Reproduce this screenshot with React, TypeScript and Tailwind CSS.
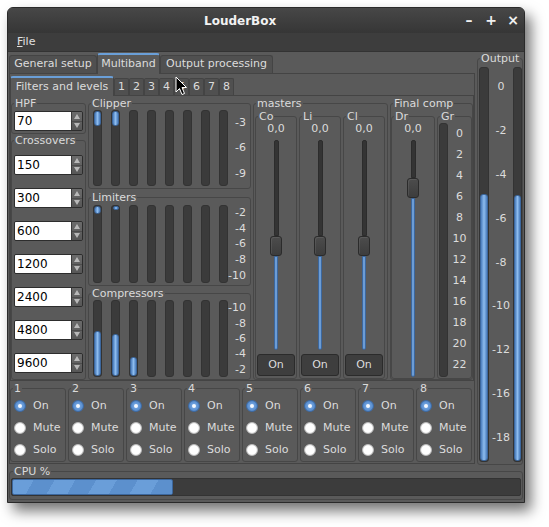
import React from 'react';

type GroupProps = {
  label: string;
  className?: string;
  children?: React.ReactNode;
};

function Group({ label, className = '', children }: GroupProps) {
  return (
    <fieldset className={`min-w-0 rounded-[3px] border border-[#474747] ${className}`}>
      <legend className="ml-[2px] px-[1px] text-[11px] leading-[13px] text-[#dadada]">{label}</legend>
      {children}
    </fieldset>
  );
}

const blueV = 'bg-[linear-gradient(90deg,#4a7cbc,#8dbcee_50%,#4a7cbc)] border border-[#3c679d]';

function Trough({ className = '', children }: { className?: string; children?: React.ReactNode }) {
  return (
    <div className={`flex w-[9px] flex-col rounded-[3px] border border-[#333] bg-[#3b3b3b] ${className}`}>
      {children}
    </div>
  );
}

function Spin({ value, className = '' }: { value: string; className?: string }) {
  return (
    <div className={`flex h-[20px] w-[69px] overflow-hidden rounded-[2px] border border-[#2d2d2d] ${className}`}>
      <div className="flex-1 bg-white px-[2px] text-[12px] leading-[18px] text-black">{value}</div>
      <div className="flex w-[11px] flex-col border-l border-[#3a3a3a] bg-gradient-to-b from-[#6b6b6b] to-[#575757]">
        <div className="flex flex-1 items-center justify-center">
          <svg width="6" height="5" viewBox="0 0 6 5">
            <polygon points="3,0 6,5 0,5" fill="#b8b8b8" />
          </svg>
        </div>
        <div className="flex flex-1 items-center justify-center border-t border-[#4c4c4c]">
          <svg width="6" height="5" viewBox="0 0 6 5">
            <polygon points="0,0 6,0 3,5" fill="#b8b8b8" />
          </svg>
        </div>
      </div>
    </div>
  );
}

function Scale({ values, className = '' }: { values: string[]; className?: string }) {
  return (
    <div className={`flex flex-1 flex-col justify-around pr-[4px] text-right text-[11px] leading-[13px] text-[#dcdcdc] ${className}`}>
      {values.map((v) => (
        <div key={v}>{v}</div>
      ))}
    </div>
  );
}

function Handle() {
  return (
    <div className="h-[20px] w-[12px] rounded-[3px] border border-[#2b2b2b] bg-gradient-to-b from-[#4c4c4c] to-[#3d3d3d] shadow-[inset_1px_1px_0_rgba(255,255,255,0.08)]" />
  );
}

function MasterStrip({ label }: { label: string }) {
  return (
    <Group label={label} className="flex h-[269px] w-[42px] flex-col items-center">
      <div className="text-[11px] leading-[12px] text-[#dcdcdc]">0,0</div>
      <div className="mt-[5px] flex flex-col items-center">
        <div className="h-[96px] w-[5px] rounded-t-[2px] border border-[#2c2c2c] bg-[#343434]" />
        <Handle />
        <div className={`h-[94px] w-[4px] rounded-b-[2px] ${blueV}`} />
      </div>
      <div className="mt-[4px] flex h-[22px] w-[38px] items-center justify-center rounded-[3px] border border-[#2b2b2b] bg-[#3e3e3e] text-[11px] text-[#dcdcdc]">
        On
      </div>
    </Group>
  );
}

function Radio({ on, label }: { on?: boolean; label: string }) {
  return (
    <div className="flex h-[22px] items-center gap-[7px] pl-[3px] text-[11px] text-[#dcdcdc]">
      {on ? (
        <span className="h-[12px] w-[12px] rounded-full border border-[#3d6aa3] bg-[radial-gradient(circle,#ffffff_0,#eaf2fc_1.5px,#6b9edc_2.5px,#4d82c4_6px)]" />
      ) : (
        <span className="h-[12px] w-[12px] rounded-full border border-[#bdbdbd] bg-[radial-gradient(circle,#ffffff_0,#ffffff_4px,#e4e4e4_6px)]" />
      )}
      <span>{label}</span>
    </div>
  );
}

export default function App() {
  const crossovers = ['150', '300', '600', '1200', '2400', '4800', '9600'];
  const grScale = ['0', '2', '4', '6', '8', '10', '12', '14', '16', '18', '20', '22'];
  const outScale = ['0', '-2', '-4', '-6', '-8', '-10', '-12', '-16', '-18'];
  const bars = [0, 1, 2, 3, 4, 5, 6, 7];
  const compFill = ['h-[45px]', 'h-[42px]', 'h-[19px]'];

  return (
    <div className="h-[527px] w-[549px] bg-white pl-[7px] pt-[7px] font-['DejaVu_Sans',sans-serif]">
      <div className="flex h-[496px] w-[518px] flex-col overflow-hidden rounded-t-[6px] border border-[#2a2a2a] bg-[#5a5a5a] shadow-[6px_8px_14px_rgba(0,0,0,0.55)]">
        {/* title bar */}
        <div className="flex h-[25px] items-center bg-gradient-to-b from-[#474747] to-[#363636] pl-[196px]">
          <span className="text-[12px] font-bold text-[#f2f2f2]">LouderBox</span>
          <div className="ml-auto flex text-[14px] font-bold text-[#f0f0f0]">
            <span className="w-[22px] text-center">–</span>
            <span className="w-[22px] text-center">+</span>
            <span className="w-[22px] text-center">×</span>
          </div>
        </div>

        {/* menu bar */}
        <div className="flex h-[19px] items-center border-b border-[#333] bg-[#3d3d3d] pl-[9px] text-[11px] text-[#e0e0e0]">
          <span>
            <span className="underline">F</span>ile
          </span>
        </div>

        {/* body */}
        <div className="flex flex-1 flex-col px-[1px]">
          <div className="flex h-[412px] gap-[2px]">
            {/* left column: tabs */}
            <div className="flex w-[466px] flex-col">
              <div className="flex h-[21px] items-end text-[11px] text-[#dcdcdc]">
                <div className="flex h-[18px] w-[88px] items-center justify-center rounded-t-[3px] border border-b-0 border-[#444] bg-[#505050]">
                  General setup
                </div>
                <div className="relative z-10 -mb-px flex h-[21px] w-[63px] items-center justify-center rounded-t-[3px] border border-b-0 border-[#444] border-t-[2px] border-t-[#6a9fd8] bg-[#5a5a5a]">
                  Multiband
                </div>
                <div className="flex h-[18px] w-[113px] items-center justify-center rounded-t-[3px] border border-b-0 border-[#444] bg-[#505050]">
                  Output processing
                </div>
              </div>

              <div className="flex flex-1 flex-col border border-[#444] pt-[2px]">
                {/* sub tabs */}
                <div className="relative flex h-[19px] items-end text-[11px] text-[#dcdcdc]">
                  <div className="relative z-10 -mb-px flex h-[20px] w-[104px] items-center justify-center rounded-t-[3px] border border-b-0 border-[#444] border-t-[2px] border-t-[#6a9fd8] bg-[#5a5a5a]">
                    Filters and levels
                  </div>
                  {bars.map((i) => (
                    <div
                      key={i}
                      className="flex h-[17px] w-[15px] items-center justify-center rounded-t-[2px] border border-b-0 border-[#444] bg-[#505050]"
                    >
                      {i + 1}
                    </div>
                  ))}
                  <svg width="13" height="20" viewBox="0 0 13 20" className="pointer-events-none absolute left-[165px] top-0 z-20">
                    <path d="M1 1 L1 16 L4.5 12.5 L7 18.5 L9.5 17.5 L7 11.5 L11.5 11.5 Z" fill="#000" stroke="#fff" strokeWidth="1" strokeLinejoin="round" />
                  </svg>
                </div>

                {/* sub frame */}
                <div className="flex h-[286px] gap-[2px] border border-[#444] pt-[1px]">
                  {/* HPF + crossovers */}
                  <div className="flex w-[75px] flex-col">
                    <Group label="HPF" className="flex h-[37px] flex-col">
                      <Spin value="70" className="ml-[2px] mt-[1px]" />
                    </Group>
                    <Group label="Crossovers" className="h-[246px]">
                      <div className="flex flex-col gap-[13px] pl-[2px] pt-[8px]">
                        {crossovers.map((c) => (
                          <Spin key={c} value={c} />
                        ))}
                      </div>
                    </Group>
                  </div>

                  {/* clipper / limiters / compressors */}
                  <div className="flex w-[163px] flex-col">
                    <Group label="Clipper" className="flex h-[92px] pb-[2px]">
                      <div className="ml-[4px] flex h-[76px] gap-[9px]">
                        {bars.map((i) => (
                          <Trough key={i}>
                            {i < 2 && <div className={`h-[15px] rounded-[3px] ${blueV}`} />}
                          </Trough>
                        ))}
                      </div>
                      <Scale values={['-3', '-6', '-9']} />
                    </Group>
                    <Group label="Limiters" className="mt-[2px] flex h-[95px] pb-[2px]">
                      <div className="ml-[4px] mt-[1px] flex h-[78px] gap-[9px]">
                        {bars.map((i) => (
                          <Trough key={i} className="items-center">
                            {i === 0 && <div className={`h-[8px] w-full rounded-full ${blueV}`} />}
                            {i === 1 && <div className={`h-[4px] w-[6px] rounded-full ${blueV}`} />}
                          </Trough>
                        ))}
                      </div>
                      <Scale values={['-2', '-4', '-6', '-8', '-10']} className="mt-[1px]" />
                    </Group>
                    <Group label="Compressors" className="mt-[1px] flex h-[93px] pb-[2px]">
                      <div className="ml-[4px] flex h-[77px] gap-[9px]">
                        {bars.map((i) => (
                          <Trough key={i} className="justify-end">
                            {i < 3 && <div className={`${compFill[i]} rounded-[3px] ${blueV}`} />}
                          </Trough>
                        ))}
                      </div>
                      <Scale values={['-10', '-8', '-6', '-4', '-2']} />
                    </Group>
                  </div>

                  {/* masters */}
                  <Group label="masters" className="flex h-[283px] w-[135px]">
                    <div className="ml-[1px] flex gap-[2px]">
                      <MasterStrip label="Co" />
                      <MasterStrip label="Li" />
                      <MasterStrip label="Cl" />
                    </div>
                  </Group>

                  {/* final comp */}
                  <Group label="Final comp" className="flex h-[283px] w-[83px] gap-[2px]">
                    <Group label="Dr" className="flex h-[269px] w-[44px] flex-col items-center">
                      <div className="text-[11px] leading-[12px] text-[#dcdcdc]">0,0</div>
                      <div className="mt-[5px] flex flex-col items-center">
                        <div className="h-[38px] w-[5px] rounded-t-[2px] border border-[#2c2c2c] bg-[#343434]" />
                        <Handle />
                        <div className={`h-[179px] w-[4px] rounded-b-[2px] ${blueV}`} />
                      </div>
                    </Group>
                    <Group label="Gr" className="flex h-[269px] w-[35px]">
                      <Trough className="ml-[1px] h-[254px]" />
                      <div className="flex flex-1 flex-col text-center text-[11px] text-[#dcdcdc]">
                        {grScale.map((g) => (
                          <div key={g} className="h-[21px] leading-[21px]">
                            {g}
                          </div>
                        ))}
                      </div>
                    </Group>
                  </Group>
                </div>

                {/* bands */}
                <div className="flex gap-[2px] pt-[1px]">
                  {bars.map((i) => (
                    <Group key={i} label={String(i + 1)} className="h-[80px] w-[56px]">
                      <Radio on label="On" />
                      <Radio label="Mute" />
                      <Radio label="Solo" />
                    </Group>
                  ))}
                </div>
              </div>
            </div>

            {/* output meter */}
            <Group label="Output" className="flex h-[413px] w-[46px] pb-[2px]">
              <Trough className="ml-[1px] mt-[2px] h-[395px] w-[10px] justify-end">
                <div className={`h-[267px] rounded-[3px] ${blueV}`} />
              </Trough>
              <div className="mt-[2px] flex w-[24px] flex-col text-center text-[11px] text-[#dcdcdc]">
                {outScale.map((o) => (
                  <div key={o} className="h-[44px] leading-[40px]">
                    {o}
                  </div>
                ))}
              </div>
              <Trough className="mt-[2px] h-[395px] justify-end">
                <div className={`h-[266px] rounded-[3px] ${blueV}`} />
              </Trough>
            </Group>
          </div>

          {/* CPU */}
          <Group label="CPU %" className="mt-[1px] h-[35px] px-[1px]">
            <div className="h-[18px] rounded-[2px] border border-[#333] bg-[#3c3c3c]">
              <div className="h-full w-[161px] rounded-[2px] border border-[#3c679d] bg-[repeating-linear-gradient(120deg,#6a9ed9_0px,#6a9ed9_18px,#5c90cd_18px,#5c90cd_36px)]" />
            </div>
          </Group>
        </div>
      </div>
    </div>
  );
}
